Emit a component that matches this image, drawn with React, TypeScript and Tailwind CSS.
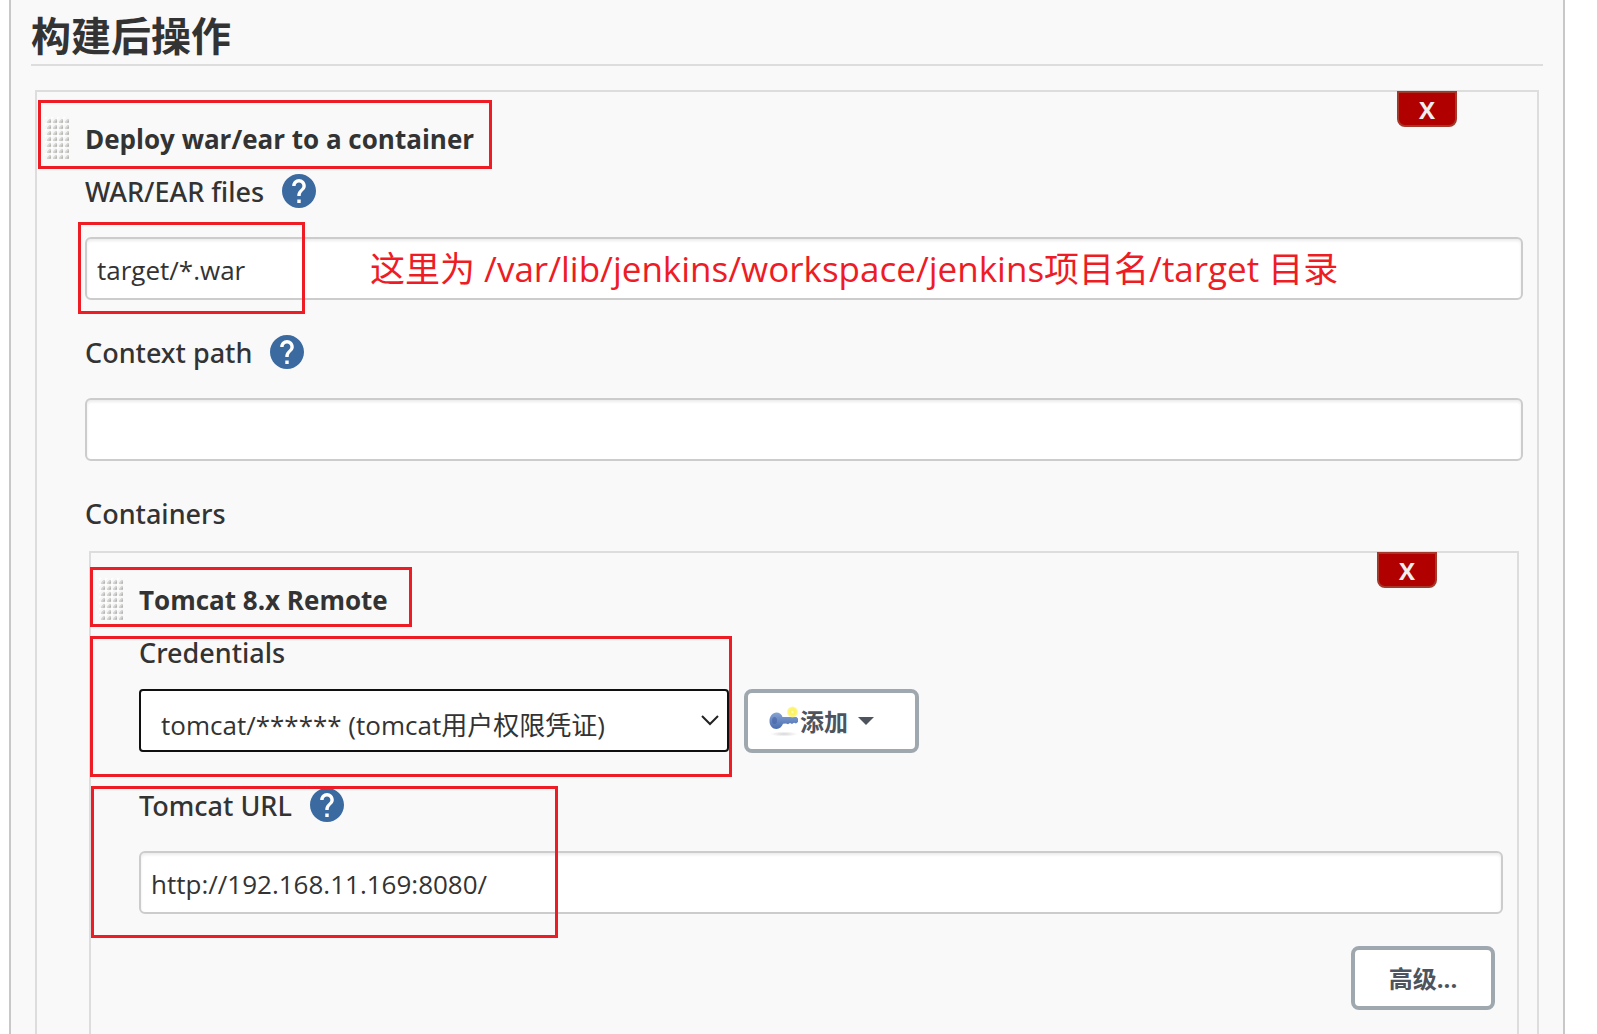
import React, { useState } from 'react';

const HelpIcon: React.FC = () => (
  <svg viewBox="2 2 20 20" className="h-full w-full" aria-hidden="true">
    <circle cx="12" cy="12" r="9" fill="#fff" />
    <path
      fill="#3b6aa0"
      d="M12 2C6.48 2 2 6.48 2 12s4.48 10 10 10 10-4.48 10-10S17.52 2 12 2zm1 17h-2v-2h2v2zm2.07-7.75l-.9.92C13.45 12.9 13 13.5 13 15h-2v-.5c0-1.1.45-2.1 1.17-2.83l1.24-1.26c.37-.36.59-.86.59-1.41 0-1.1-.9-2-2-2s-2 .9-2 2H8c0-2.21 1.79-4 4-4s4 1.79 4 4c0 .88-.36 1.68-.93 2.25z"
    />
  </svg>
);

const KeyIcon: React.FC = () => (
  <svg viewBox="0 0 32 32" className="h-8 w-8" aria-hidden="true">
    <defs>
      <linearGradient id="keyBody" x1="0" y1="0" x2="0" y2="1">
        <stop offset="0" stopColor="#86a3d3" />
        <stop offset="1" stopColor="#4a6cb0" />
      </linearGradient>
      <radialGradient id="keyShadow">
        <stop offset="0" stopColor="#000" stopOpacity="0.16" />
        <stop offset="1" stopColor="#000" stopOpacity="0" />
      </radialGradient>
      <radialGradient id="keyStar">
        <stop offset="0" stopColor="#fffbd0" />
        <stop offset="0.35" stopColor="#fdf35a" />
        <stop offset="0.75" stopColor="#fdf580" />
        <stop offset="1" stopColor="#fdf580" stopOpacity="0" />
      </radialGradient>
    </defs>
    <ellipse cx="16" cy="29" rx="14" ry="2.500" fill="url(#keyShadow)" />
    <path
      fill="url(#keyBody)"
      d="M8.500 7.500c3 0 5 1.500 6 4.500h14l1.500 1.500v3.500l-2 1.500-2-.8-2 1.300-2-1-2 1.200-2-.8-3 .4c-1 3-3.500 5.200-6.500 5.200C4.500 24 1.500 20.500 1.500 16S4.500 7.500 8.500 7.500z"
    />
    <ellipse cx="6.500" cy="15.500" rx="2.500" ry="3.500" fill="#3f5f9e" opacity="0.55" />
    <circle cx="24.500" cy="7" r="6" fill="url(#keyStar)" />
  </svg>
);

const DragHandle: React.FC = () => (
  <svg viewBox="0 0 24 42" className="h-[42px] w-6 shrink-0" aria-hidden="true">
    <defs>
      <pattern id="grip" width="6" height="6" patternUnits="userSpaceOnUse">
        <rect width="6" height="6" fill="#f7f7f7" />
        <path d="M2 6V4.500L4.500 2H6v4z" fill="#d4d4d2" />
        <path d="M3.500 5.500L6 3v2.500z" fill="#b4b4b0" />
        <path d="M0 0h3L0 3z" fill="#fff" />
      </pattern>
    </defs>
    <rect width="24" height="42" fill="url(#grip)" />
  </svg>
);

const DeleteButton: React.FC = () => (
  <button
    type="button"
    className="absolute -top-px right-20 flex h-9 w-15 items-center justify-center rounded-b-lg border-2 border-[#a5372b] bg-[#b00000] pt-0.5 text-2xl font-bold text-[#eeeeee]"
  >
    X
  </button>
);

const SectionHeader: React.FC<{ title: string }> = ({ title }) => (
  <div className="mt-6 flex h-11 items-center gap-4 pl-2">
    <DragHandle />
    <h2 className="pt-0.5 text-[26px] leading-9 font-bold whitespace-nowrap">{title}</h2>
  </div>
);

interface FieldLabelProps {
  text: string;
  htmlFor?: string;
  help?: boolean;
}

const FieldLabel: React.FC<FieldLabelProps> = ({ text, htmlFor, help }) => (
  <div className="flex h-[34px] items-center gap-[18px]">
    <label htmlFor={htmlFor} className="pt-0.5 font-['Noto_Sans',sans-serif] text-[27px] leading-9 font-medium">
      {text}
    </label>
    {help && (
      <button type="button" aria-label="Help" className="h-[34px] w-[34px]">
        <HelpIcon />
      </button>
    )}
  </div>
);

interface TextFieldProps {
  id: string;
  label: string;
  value: string;
  onChange: (value: string) => void;
}

const TextField: React.FC<TextFieldProps> = ({ id, label, value, onChange }) => (
  <div>
    <FieldLabel text={label} htmlFor={id} help />
    <input
      id={id}
      type="text"
      value={value}
      onChange={(e) => onChange(e.target.value)}
      className="mt-[29px] block h-[63px] w-full rounded-md border-2 border-[#cccccc] bg-white px-[10px] pt-0.5 text-[26px] shadow-[inset_0_2px_3px_rgba(0,0,0,0.08)] outline-none"
    />
  </div>
);

const App: React.FC = () => {
  const [warFiles, setWarFiles] = useState('target/*.war');
  const [contextPath, setContextPath] = useState('');
  const [credential, setCredential] = useState('tomcat');
  const [tomcatUrl, setTomcatUrl] = useState('http://192.168.11.169:8080/');

  return (
    <div className="h-screen overflow-hidden bg-white pr-8 pl-[9px] font-['Open_Sans','Noto_Sans_CJK_SC',sans-serif] text-[#333333]">
      <main className="flex min-h-full flex-col border-x-2 border-[#c8c8c8] bg-[#f9f9f9] px-5">
        <h1 className="border-b-2 border-[#dddddd] pt-2 text-[40px] leading-14 font-bold">构建后操作</h1>

        <section className="relative mx-1 mt-6 flex flex-1 flex-col border-2 border-b-0 border-[#dddddd]">
          <DeleteButton />
          <SectionHeader title="Deploy war/ear to a container" />
          <div className="pointer-events-none absolute top-2 left-px h-[69px] w-[454px] border-3 border-[#ee1c25]" />

          <div className="flex flex-1 flex-col pt-[14px] pr-[14px] pl-12">
            <div className="relative">
              <TextField id="war" label="WAR/EAR files" value={warFiles} onChange={setWarFiles} />
              <div className="pointer-events-none absolute top-12 -left-[7px] h-[92px] w-[227px] border-3 border-[#ee1c25]" />
              <p className="pointer-events-none absolute bottom-[7px] left-[285px] text-[35px] leading-12 whitespace-nowrap text-[#ee1c25]">
                这里为 /var/lib/jenkins/workspace/jenkins项目名/target 目录
              </p>
            </div>

            <div className="mt-[35px]">
              <TextField id="context" label="Context path" value={contextPath} onChange={setContextPath} />
            </div>

            <div className="mt-[35px]">
              <FieldLabel text="Containers" />
            </div>

            <section className="relative mx-1 mt-[21px] flex-1 border-2 border-b-0 border-[#dddddd]">
              <DeleteButton />
              <SectionHeader title="Tomcat 8.x Remote" />
              <div className="pointer-events-none absolute top-[14px] -left-px h-[60px] w-[322px] border-3 border-[#ee1c25]" />
              <div className="pointer-events-none absolute top-[83px] -left-px h-[141px] w-[642px] border-3 border-[#ee1c25]" />

              <div className="pt-[14px] pr-[14px] pb-6 pl-12">
                <FieldLabel text="Credentials" htmlFor="credentials" />
                <div className="mt-5 flex gap-[15px]">
                  <div className="relative h-[63px] w-[590px]">
                    <select
                      id="credentials"
                      value={credential}
                      onChange={(e) => setCredential(e.target.value)}
                      className="h-full w-full appearance-none rounded-sm border-2 border-[#101010] bg-white pt-[10px] pl-5 text-[26px] outline-none"
                    >
                      <option value="tomcat">tomcat/****** (tomcat用户权限凭证)</option>
                    </select>
                    <svg
                      viewBox="0 0 18 11"
                      className="pointer-events-none absolute top-[26px] right-[10px] h-[11px] w-[18px]"
                      aria-hidden="true"
                    >
                      <path d="M1 1l8 8 8-8" fill="none" stroke="#222" strokeWidth="2" />
                    </svg>
                  </div>
                  <button
                    type="button"
                    className="flex h-16 w-[175px] items-center rounded-lg border-4 border-[#9fa8af] bg-white pl-5 text-2xl font-bold text-[#4d545d]"
                  >
                    <KeyIcon />
                    <span className="pt-0.5">添加</span>
                    <svg viewBox="0 0 16 8" className="ml-[10px] h-2 w-4" aria-hidden="true">
                      <path d="M0 0h16L8 8z" fill="#4d545d" />
                    </svg>
                  </button>
                </div>

                <div className="relative mt-[35px]">
                  <TextField id="url" label="Tomcat URL" value={tomcatUrl} onChange={setTomcatUrl} />
                  <div className="pointer-events-none absolute -top-[2px] -left-12 h-[152px] w-[467px] border-3 border-[#ee1c25]" />
                </div>

                <div className="mt-8 flex justify-end pr-2">
                  <button
                    type="button"
                    className="h-16 w-36 rounded-lg border-4 border-[#9fa8af] bg-white pt-0.5 text-2xl font-bold text-[#4d545d]"
                  >
                    高级...
                  </button>
                </div>
              </div>
            </section>
          </div>
        </section>
      </main>
    </div>
  );
};

export default App;
